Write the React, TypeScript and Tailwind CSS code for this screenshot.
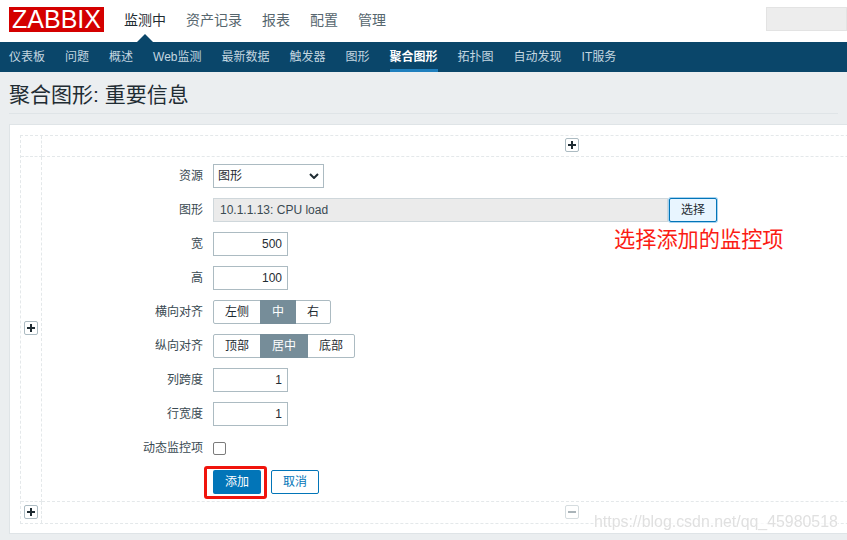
import React from "react";

function Row({ label, children, mt = "mt-[10px]" }: { label: string; children: React.ReactNode; mt?: string }) {
  return (
    <div className={`flex h-[24px] items-center ${mt}`}>
      <div className="w-[161px] text-right text-[12px] text-[#3a4a52]">{label}</div>
      <div className="ml-[10px] flex items-center">{children}</div>
    </div>
  );
}

function NumInput({ value }: { value: string }) {
  return (
    <input
      readOnly
      value={value}
      className="box-border h-[24px] w-[75px] border border-[#acbbc2] bg-white pr-[5px] text-right text-[12px] text-[#1f2c33] outline-none"
    />
  );
}

function Seg({ items, active }: { items: string[]; active: number }) {
  return (
    <div className="flex h-[24px] rounded-[2px] border border-[#acbbc2] bg-white">
      {items.map((t, i) => (
        <div
          key={t}
          className={
            i === active
              ? "-my-px flex items-center bg-[#768d99] px-[12px] text-[12px] text-white"
              : "flex items-center px-[11px] text-[12px] text-[#1f2c33]"
          }
        >
          {t}
        </div>
      ))}
    </div>
  );
}

function IconBtn({ minus = false }: { minus?: boolean }) {
  return (
    <div className={`flex h-[14px] w-[14px] items-center justify-center rounded-[2px] border bg-white ${minus ? "border-[#d5dcdf]" : "border-[#acbbc2]"}`}>
      <svg width="10" height="10" viewBox="0 0 10 10">
        {!minus && <rect x="4" y="1" width="2" height="8" fill="#1f2c33" />}
        <rect x="1" y="4" width="8" height="2" fill={minus ? "#aab4b9" : "#1f2c33"} />
      </svg>
    </div>
  );
}

const top = ["监测中", "资产记录", "报表", "配置", "管理"];
const sub = ["仪表板", "问题", "概述", "Web监测", "最新数据", "触发器", "图形", "聚合图形", "拓扑图", "自动发现", "IT服务"];

export default function App() {
  return (
    <div
      className="relative h-[540px] w-[847px] overflow-hidden bg-[#ebeef0]"
      style={{ fontFamily: '"Liberation Sans","Noto Sans CJK SC",sans-serif' }}
    >
      {/* Top bar */}
      <div className="flex h-[42px] items-start bg-white">
        <div className="ml-[9px] mt-[7px] flex h-[25px] w-[95px] items-center justify-center bg-[#d40000] text-[25px] leading-none text-white">
          ZABBIX
        </div>
        <div className="ml-[20px] mt-[11px] flex gap-[20px] text-[14px] leading-[18px] text-[#56666e]">
          {top.map((t, i) => (
            <div key={t} className={`relative ${i === 0 ? "text-[#1f2c33]" : ""}`}>
              {t}
              {i === 0 && (
                <div className="absolute left-1/2 top-[23px] h-0 w-0 -translate-x-1/2 border-x-[8px] border-b-[8px] border-x-transparent border-b-[#0a466a]" />
              )}
            </div>
          ))}
        </div>
        <div className="ml-auto mt-[7px] h-[24px] w-[81px] border border-[#e3e3e3] bg-[#ededed]" />
      </div>

      {/* Sub nav */}
      <div className="flex h-[30px] gap-[20px] bg-[#0a466a] pl-[9px] text-[12px] text-[#c4d6e0]">
        {sub.map((t) => (
          <div
            key={t}
            className={`flex h-[30px] items-center ${t === "聚合图形" ? "border-b-[3px] border-[#1f7fbd] pt-[3px] font-bold text-white" : ""}`}
          >
            {t}
          </div>
        ))}
      </div>

      {/* Title */}
      <div className="mx-[9px] flex h-[42px] items-center border-b border-[#dfe4e7] pt-[3px] text-[21px] leading-none text-[#1f2c33]">
        聚合图形: 重要信息
      </div>

      {/* Panel */}
      <div className="ml-[9px] mt-[10px] box-border h-[410px] w-[1200px] border border-[#dfe4e7] bg-white pl-[10px] pt-[10px]">
        <div className="grid w-[1084px] grid-cols-[21px_1061px] grid-rows-[21px_345px_21px] border border-dashed border-[#e4e8ea]">
          <div className="border-b border-r border-dashed border-[#e4e8ea]" />
          <div className="flex items-center justify-center border-b border-dashed border-[#e4e8ea] pb-[2px] pr-[2px]">
            <IconBtn />
          </div>
          <div className="flex items-center justify-center border-b border-r border-dashed border-[#e4e8ea] pb-[2px]">
            <IconBtn />
          </div>
          <div className="border-b border-dashed border-[#e4e8ea] pt-[7px]">
            <Row label="资源" mt="mt-0">
              <div className="relative">
                <select className="box-border block h-[24px] w-[111px] appearance-none border border-[#acbbc2] bg-white pl-[4px] text-[12px] text-[#1f2c33] outline-none">
                  <option>图形</option>
                </select>
                <svg className="absolute left-[96px] top-[9px]" width="10" height="6" viewBox="0 0 10 6">
                  <path d="M1 1l4 4 4-4" fill="none" stroke="#1f2c33" strokeWidth="2" />
                </svg>
              </div>
            </Row>
            <Row label="图形">
              <input
                readOnly
                value="10.1.1.13: CPU load"
                className="box-border h-[24px] w-[455px] border border-[#cfd7db] bg-[#ebebeb] pl-[6px] text-[12px] text-[#3a4a52] outline-none"
              />
              <button className="ml-px h-[24px] w-[48px] rounded-[2px] border border-[#0275b8] bg-[#e8f5ff] text-[12px] text-[#1f2c33] shadow-[0_0_0_1px_#a8d3f0]">
                选择
              </button>
            </Row>
            <Row label="宽"><NumInput value="500" /></Row>
            <Row label="高"><NumInput value="100" /></Row>
            <Row label="横向对齐"><Seg items={["左侧", "中", "右"]} active={1} /></Row>
            <Row label="纵向对齐"><Seg items={["顶部", "居中", "底部"]} active={1} /></Row>
            <Row label="列跨度"><NumInput value="1" /></Row>
            <Row label="行宽度"><NumInput value="1" /></Row>
            <Row label="动态监控项">
              <div className="h-[13px] w-[13px] rounded-[2px] border border-[#7b7b7b] bg-white" />
            </Row>
            <div className="ml-[171px] mt-[10px] flex gap-[10px]">
              <button className="h-[24px] w-[48px] rounded-[2px] bg-[#0275b8] text-[12px] text-white">添加</button>
              <button className="h-[24px] w-[48px] rounded-[2px] border border-[#0275b8] bg-white text-[12px] text-[#0275b8]">取消</button>
            </div>
          </div>
          <div className="flex items-center justify-center border-r border-dashed border-[#e4e8ea] pb-[2px]">
            <IconBtn />
          </div>
          <div className="flex items-center justify-center pb-[2px] pr-[2px]">
            <IconBtn minus />
          </div>
        </div>
      </div>

      {/* Annotation overlays */}
      <div className="absolute left-[614px] top-[227px] text-[21.2px] leading-[26px] text-[#fb1c14]">选择添加的监控项</div>
      <div className="absolute left-[204px] top-[466px] h-[33px] w-[63px] rounded-[3px] border-[3px] border-[#f0140c]" />
      <div className="absolute left-[594px] top-[512px] bg-white/70 text-[15.9px] leading-[20px] text-[#e0e0e0] blur-[0.4px]">
        https://blog.csdn.net/qq_45980518
      </div>
    </div>
  );
}
